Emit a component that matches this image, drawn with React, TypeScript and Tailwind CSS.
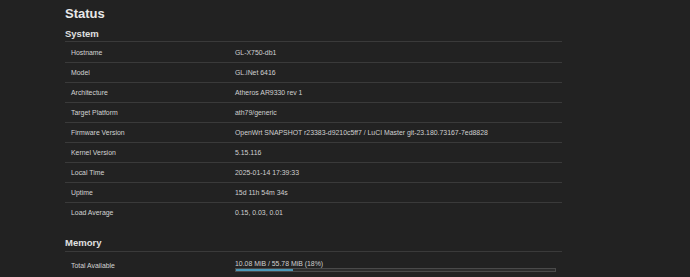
const systemRows: [string, string][] = [
  ['Hostname', 'GL-X750-db1'],
  ['Model', 'GL.iNet 6416'],
  ['Architecture', 'Atheros AR9330 rev 1'],
  ['Target Platform', 'ath79/generic'],
  ['Firmware Version', 'OpenWrt SNAPSHOT r23383-d9210c5ff7 / LuCI Master git-23.180.73167-7ed8828'],
  ['Kernel Version', '5.15.116'],
  ['Local Time', '2025-01-14 17:39:33'],
  ['Uptime', '15d 11h 54m 34s'],
  ['Load Average', '0.15, 0.03, 0.01'],
];

function Row({ label, children, first }: { label: string; children: React.ReactNode; first?: boolean }) {
  return (
    <div
      className={`flex items-center border-t border-[#3a3a3a] pt-[1px] ${first ? 'h-[21px]' : 'h-[20px]'}`}
    >
      <div className="w-[33%] px-[6px] text-[#d4d4d4]">{label}</div>
      <div className="flex-1 px-[6px] text-[#d0d0d0] whitespace-nowrap">{children}</div>
    </div>
  );
}

export default function App() {
  return (
    <div
      className="h-[277px] w-[690px] overflow-hidden bg-[#222222]"
      style={{ fontFamily: '"Liberation Sans", Arial, sans-serif' }}
    >
      <div className="ml-[65px] w-[497px] pt-[6px]">
        <h2 className="text-[13px] font-bold leading-[16px] text-[#e8e8e8]">Status</h2>

        <h3 className="mt-[6px] text-[9.5px] font-bold leading-[12px] text-[#e0e0e0]">System</h3>
        <div className="mt-[1px] text-[6.9px] leading-[8px]">
          {systemRows.map(([k, v], i) => (
            <Row key={k} label={k} first={i === 0}>
              {v}
            </Row>
          ))}
        </div>

        <h3 className="mt-[15px] text-[9.5px] font-bold leading-[12px] text-[#e0e0e0]">Memory</h3>
        <div className="mt-[2px] text-[6.9px] leading-[8px]">
          <div className="flex h-[28px] items-center border-t border-[#3a3a3a]">
            <div className="w-[33%] px-[6px] text-[#d4d4d4]">Total Available</div>
            <div className="flex-1 px-[6px] text-[#d0d0d0]">
              <div className="leading-[7px]">10.08 MiB / 55.78 MiB (18%)</div>
              <div className="mt-[1px] h-[4px] border border-[#4a4a4a] bg-[#2c2c2c]">
                <div className="h-full bg-[#4a98b8]" style={{ width: '18%' }} />
              </div>
            </div>
          </div>
        </div>
      </div>
    </div>
  );
}
